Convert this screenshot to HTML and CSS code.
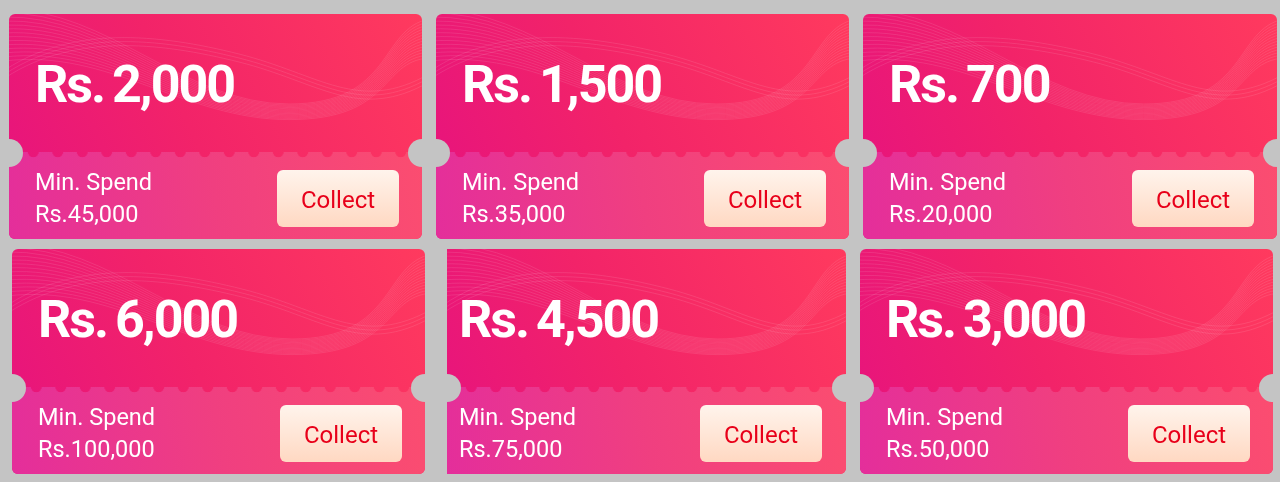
FILE: index.html
```html
<!DOCTYPE html>
<html lang="en">
<head>
<meta charset="utf-8">
<title>Vouchers</title>
<link rel="stylesheet" href="styles.css">
</head>
<body>
<div class="board">
  <div class="row row-a">
    <div class="coupon">
      <div class="top">Rs. 2,000</div>
      <div class="bottom">
        <div class="spend"><div>Min. Spend</div><div>Rs.45,000</div></div>
        <button class="collect">Collect</button>
      </div>
    </div>
    <div class="coupon">
      <div class="top">Rs. 1,500</div>
      <div class="bottom">
        <div class="spend"><div>Min. Spend</div><div>Rs.35,000</div></div>
        <button class="collect">Collect</button>
      </div>
    </div>
    <div class="coupon">
      <div class="top">Rs. 700</div>
      <div class="bottom">
        <div class="spend"><div>Min. Spend</div><div>Rs.20,000</div></div>
        <button class="collect">Collect</button>
      </div>
    </div>
  </div>
  <div class="row row-b">
    <div class="coupon">
      <div class="top">Rs. 6,000</div>
      <div class="bottom">
        <div class="spend"><div>Min. Spend</div><div>Rs.100,000</div></div>
        <button class="collect">Collect</button>
      </div>
    </div>
    <div class="coupon coupon-clipped">
      <div class="top">Rs. 4,500</div>
      <div class="bottom">
        <div class="spend"><div>Min. Spend</div><div>Rs.75,000</div></div>
        <button class="collect">Collect</button>
      </div>
    </div>
    <div class="coupon">
      <div class="top">Rs. 3,000</div>
      <div class="bottom">
        <div class="spend"><div>Min. Spend</div><div>Rs.50,000</div></div>
        <button class="collect">Collect</button>
      </div>
    </div>
  </div>
</div>
</body>
</html>
```

FILE: styles.css
```css
html, body {
  margin: 0;
  background: #c4c4c4;
  font-family: Roboto, "Noto Sans", "Liberation Sans", sans-serif;
}

.board {
  padding-top: 14px;
  display: flex;
  flex-direction: column;
  gap: 10px;
}

.row {
  display: grid;
  grid-template-columns: 413px 413px 414px;
  column-gap: 14px;
  height: 225px;
}

.row-a {
  padding-left: 9px;
}

.row-b {
  padding-left: 12px;
  grid-template-columns: 413px 407px 413px;
}

.coupon {
  position: relative;
  overflow: hidden;
  border-radius: 6px;
  display: flex;
  flex-direction: column;
  background: linear-gradient(65deg, #e6127f 0%, #f22369 45%, #ff3a5e 100%);
}

.coupon-clipped {
  width: 399px;
  justify-self: end;
  border-top-left-radius: 0;
  border-bottom-left-radius: 0;
}

.coupon::before,
.coupon::after {
  content: "";
  position: absolute;
  top: 125px;
  width: 28px;
  height: 28px;
  border-radius: 50%;
  background: #c4c4c4;
  z-index: 2;
}

.coupon::before {
  left: -14px;
}

.coupon::after {
  right: -14px;
}

.top {
  height: 138px;
  box-sizing: border-box;
  padding: 45px 0 0 26px;
  color: #fff;
  font-weight: 700;
  font-size: 52px;
  line-height: 52px;
  letter-spacing: -2px;
  word-spacing: -3px;
  white-space: nowrap;
  background: url("data:image/svg+xml,<svg xmlns='http://www.w3.org/2000/svg' viewBox='0 0 413 138' preserveAspectRatio='none'><g fill='none' stroke='%23ffffff' stroke-opacity='0.15' stroke-width='0.7'><path d='M-5 -5 C100 -5 175 90 280 90 S370 15 420 5'/><path d='M-5 -1 C100 -2 175 91.2 280 91.2 S370 17.5 420 8'/><path d='M-5 3 C100 1 175 92.4 280 92.4 S370 20 420 11'/><path d='M-5 7 C100 4 175 93.6 280 93.6 S370 22.5 420 14'/><path d='M-5 11 C100 7 175 94.8 280 94.8 S370 25 420 17'/><path d='M-5 15 C100 10 175 96 280 96 S370 27.5 420 20'/><path d='M-5 19 C100 13 175 97.2 280 97.2 S370 30 420 23'/><path d='M-5 23 C100 16 175 98.4 280 98.4 S370 32.5 420 26'/><path d='M-5 27 C100 19 175 99.6 280 99.6 S370 35 420 29'/><path d='M-5 31 C100 22 175 100.8 280 100.8 S370 37.5 420 32'/><path d='M-5 35 C100 25 175 102 280 102 S370 40 420 35'/><path d='M-5 39 C100 28 175 103.2 280 103.2 S370 42.5 420 38'/><path d='M-5 43 C100 31 175 104.4 280 104.4 S370 45 420 41'/><path d='M-5 47 C100 34 175 105.6 280 105.6 S370 47.5 420 44'/><path d='M-10 60 C60 10 150 20 230 40 S350 100 420 60'/><path d='M-10 64 C60 14 150 24 230 44 S350 104 420 64'/><path d='M-10 68 C60 18 150 28 230 48 S350 108 420 68'/></g></svg>") 0 0 / 100% 100% no-repeat;
}

.coupon-clipped .top {
  padding-left: 12px;
}

.bottom {
  flex: 1;
  display: flex;
  justify-content: space-between;
  align-items: flex-start;
  padding: 14px 23px 0 26px;
  background: linear-gradient(80deg, #e42e9b 0%, #f03f80 50%, #fb4d70 100%);
  -webkit-mask-image: radial-gradient(circle at 12.25px 0, transparent 5px, #000 5.6px);
  -webkit-mask-size: 24.5px 100%;
  -webkit-mask-repeat: repeat-x;
  -webkit-mask-position: 12px 0;
  mask-image: radial-gradient(circle at 12.25px 0, transparent 5px, #000 5.6px);
  mask-size: 24.5px 100%;
  mask-repeat: repeat-x;
  mask-position: 12px 0;
}

.coupon-clipped .bottom {
  padding-left: 12px;
  padding-right: 24px;
}

.spend {
  color: #fff;
  font-size: 23.5px;
  line-height: 32px;
  white-space: nowrap;
}

.collect {
  margin-top: 4px;
  width: 122px;
  height: 57px;
  border: 0;
  border-radius: 6px;
  background: linear-gradient(180deg, #fff4ec 0%, #ffd8c2 100%);
  color: #e8001a;
  font-family: inherit;
  font-size: 24px;
  font-weight: 400;
  display: flex;
  align-items: center;
  justify-content: center;
  padding: 2px 0 0;
}
```
